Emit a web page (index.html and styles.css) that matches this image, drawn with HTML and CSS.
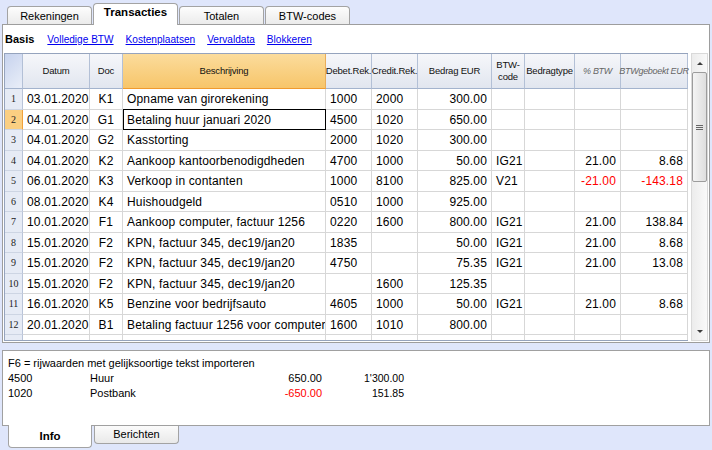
FILE: index.html
```html
<!DOCTYPE html>
<html>
<head>
<meta charset="utf-8">
<link rel="stylesheet" href="styles.css">
</head>
<body>
<div class="tabs">
  <div class="tab">Rekeningen</div>
  <div class="tab active">Transacties</div>
  <div class="tab">Totalen</div>
  <div class="tab">BTW-codes</div>
</div>
<div class="panel">
  <div class="subtabs">
    <span class="basis">Basis</span>
    <a href="#">Volledige BTW</a>
    <a href="#">Kostenplaatsen</a>
    <a href="#">Vervaldata</a>
    <a href="#">Blokkeren</a>
  </div>
  <div class="gridarea">
    <div class="table">
      <div class="cols thead">
        <div class="h corner"></div>
        <div class="h">Datum</div>
        <div class="h">Doc</div>
        <div class="h sel">Beschrijving</div>
        <div class="h">Debet.Rek.</div>
        <div class="h">Credit.Rek.</div>
        <div class="h">Bedrag EUR</div>
        <div class="h">BTW-<br>code</div>
        <div class="h">Bedragtype</div>
        <div class="h it">% BTW</div>
        <div class="h it">BTWgeboekt EUR</div>
      </div>
      <div class="tbody">
        <div class="cols row"><div class="n">1</div><div class="c">03.01.2020</div><div class="c ctr">K1</div><div class="c">Opname van girorekening</div><div class="c">1000</div><div class="c">2000</div><div class="c r">300.00</div><div class="c"></div><div class="c"></div><div class="c r"></div><div class="c r"></div></div>
        <div class="cols row"><div class="n cur">2</div><div class="c">04.01.2020</div><div class="c ctr">G1</div><div class="c focus">Betaling huur januari 2020</div><div class="c">4500</div><div class="c">1020</div><div class="c r">650.00</div><div class="c"></div><div class="c"></div><div class="c r"></div><div class="c r"></div></div>
        <div class="cols row"><div class="n">3</div><div class="c">04.01.2020</div><div class="c ctr">G2</div><div class="c">Kasstorting</div><div class="c">2000</div><div class="c">1020</div><div class="c r">300.00</div><div class="c"></div><div class="c"></div><div class="c r"></div><div class="c r"></div></div>
        <div class="cols row"><div class="n">4</div><div class="c">04.01.2020</div><div class="c ctr">K2</div><div class="c">Aankoop kantoorbenodigdheden</div><div class="c">4700</div><div class="c">1000</div><div class="c r">50.00</div><div class="c">IG21</div><div class="c"></div><div class="c r">21.00</div><div class="c r">8.68</div></div>
        <div class="cols row"><div class="n">5</div><div class="c">06.01.2020</div><div class="c ctr">K3</div><div class="c">Verkoop in contanten</div><div class="c">1000</div><div class="c">8100</div><div class="c r">825.00</div><div class="c">V21</div><div class="c"></div><div class="c r neg">-21.00</div><div class="c r neg">-143.18</div></div>
        <div class="cols row"><div class="n">6</div><div class="c">08.01.2020</div><div class="c ctr">K4</div><div class="c">Huishoudgeld</div><div class="c">0510</div><div class="c">1000</div><div class="c r">925.00</div><div class="c"></div><div class="c"></div><div class="c r"></div><div class="c r"></div></div>
        <div class="cols row"><div class="n">7</div><div class="c">10.01.2020</div><div class="c ctr">F1</div><div class="c">Aankoop computer, factuur 1256</div><div class="c">0220</div><div class="c">1600</div><div class="c r">800.00</div><div class="c">IG21</div><div class="c"></div><div class="c r">21.00</div><div class="c r">138.84</div></div>
        <div class="cols row"><div class="n">8</div><div class="c">15.01.2020</div><div class="c ctr">F2</div><div class="c">KPN, factuur 345, dec19/jan20</div><div class="c">1835</div><div class="c"></div><div class="c r">50.00</div><div class="c">IG21</div><div class="c"></div><div class="c r">21.00</div><div class="c r">8.68</div></div>
        <div class="cols row"><div class="n">9</div><div class="c">15.01.2020</div><div class="c ctr">F2</div><div class="c">KPN, factuur 345, dec19/jan20</div><div class="c">4750</div><div class="c"></div><div class="c r">75.35</div><div class="c">IG21</div><div class="c"></div><div class="c r">21.00</div><div class="c r">13.08</div></div>
        <div class="cols row"><div class="n">10</div><div class="c">15.01.2020</div><div class="c ctr">F2</div><div class="c">KPN, factuur 345, dec19/jan20</div><div class="c"></div><div class="c">1600</div><div class="c r">125.35</div><div class="c"></div><div class="c"></div><div class="c r"></div><div class="c r"></div></div>
        <div class="cols row"><div class="n">11</div><div class="c">16.01.2020</div><div class="c ctr">K5</div><div class="c">Benzine voor bedrijfsauto</div><div class="c">4605</div><div class="c">1000</div><div class="c r">50.00</div><div class="c">IG21</div><div class="c"></div><div class="c r">21.00</div><div class="c r">8.68</div></div>
        <div class="cols row"><div class="n">12</div><div class="c">20.01.2020</div><div class="c ctr">B1</div><div class="c">Betaling factuur 1256 voor computer</div><div class="c">1600</div><div class="c">1010</div><div class="c r">800.00</div><div class="c"></div><div class="c"></div><div class="c r"></div><div class="c r"></div></div>
        <div class="cols row"><div class="n"></div><div class="c"></div><div class="c"></div><div class="c"></div><div class="c"></div><div class="c"></div><div class="c"></div><div class="c"></div><div class="c"></div><div class="c"></div><div class="c"></div></div>
      </div>
    </div>
    <div class="scroll">
      <div class="arrow up"></div>
      <div class="thumb"><span></span><span></span><span></span></div>
      <div class="spacer"></div>
      <div class="arrow down"></div>
    </div>
  </div>
</div>
<div class="info">
  <div class="line">F6 = rijwaarden met gelijksoortige tekst importeren</div>
  <div class="irow"><span>4500</span><span>Huur</span><span class="r">650.00</span><span class="r small">1'300.00</span></div>
  <div class="irow"><span>1020</span><span>Postbank</span><span class="r neg">-650.00</span><span class="r small">151.85</span></div>
</div>
<div class="btabs">
  <div class="btab active">Info</div>
  <div class="btab">Berichten</div>
</div>
</body>
</html>
```
FILE: styles.css
```css
html, body {
  margin: 0;
  padding: 0;
}
body {
  background: #dfe6fb;
  font-family: "Liberation Sans", Arial, sans-serif;
  color: #000;
  width: 712px;
  height: 450px;
  overflow: hidden;
}
.tabs {
  display: flex;
  align-items: flex-end;
  height: 24px;
  padding-left: 7px;
  gap: 1px;
}
.tab {
  width: 85px;
  height: 18px;
  box-sizing: border-box;
  border: 1px solid #a3a3a3;
  border-bottom: none;
  border-radius: 4px 4px 0 0;
  background: linear-gradient(#fdfdfd, #ebebeb);
  text-align: center;
  font-size: 11px;
  line-height: 18px;
}
.tab.active {
  height: 22px;
  margin-bottom: -1px;
  background: #fff;
  font-weight: bold;
  font-size: 11.5px;
  line-height: 17px;
  position: relative;
  z-index: 1;
}
.panel {
  margin-left: 2px;
  width: 708px;
  height: 319px;
  box-sizing: border-box;
  border: 1px solid #9d9d9d;
  background: #fff;
}
.subtabs {
  height: 28px;
  display: flex;
  align-items: center;
  gap: 12px;
  padding-left: 2px;
  font-size: 10.1px;
}
.subtabs .basis {
  font-weight: bold;
  font-size: 11px;
  margin-right: 1px;
}
.subtabs a {
  color: #0000ee;
  text-decoration: underline;
}
.gridarea {
  display: flex;
  gap: 3px;
  padding-left: 1px;
}
.table {
  width: 684px;
  height: 288px;
  box-sizing: border-box;
  border: 1px solid #95a3bd;
  border-right: none;
  display: flex;
  flex-direction: column;
}
.cols {
  display: grid;
  grid-template-columns: 18px 67px 33px 203px 46px 46px 74px 33px 50px 46px 67px;
}
.thead {
  height: 35px;
}
.h {
  box-sizing: border-box;
  border-right: 1px solid #b3c0d6;
  border-bottom: 1px solid #a3b3cd;
  background: linear-gradient(#f6f7fa, #e1e6ef);
  display: flex;
  align-items: center;
  justify-content: center;
  text-align: center;
  font-size: 9.5px;
  line-height: 12px;
  letter-spacing: -0.2px;
  white-space: nowrap;
  color: #111;
}
.h.corner {
  background: linear-gradient(135deg, #c7d3ee, #e9eef8);
}
.h.sel {
  background: linear-gradient(#fbdc9c, #f7c56a);
  border-right-color: #e9ad5a;
  border-bottom: 1px solid #f09a2e;
}
.h.it {
  font-style: italic;
  color: #666;
  font-size: 9px;
  letter-spacing: -0.3px;
}
.tbody {
  height: 251px;
  overflow: hidden;
}
.row {
  height: 20.5px;
}
.row > div {
  box-sizing: border-box;
  border-bottom: 1px solid #d7d7d7;
  border-right: 1px solid #d7d7d7;
  font-size: 12px;
  letter-spacing: 0.15px;
  line-height: 20px;
  white-space: nowrap;
  overflow: hidden;
  padding: 0 3px 0 4px;
}
.row .n {
  background: #e6ebf5;
  border-right-color: #b9c4d8;
  border-bottom-color: #cdd5e3;
  font-family: "Liberation Serif", serif;
  font-size: 10px;
  letter-spacing: 0;
  text-align: center;
  padding: 0;
  color: #222;
}
.row .n.cur {
  background: #fbcf82;
  border-right-color: #f0a23c;
}
.row .ctr {
  text-align: center;
  padding: 0;
}
.row .r {
  text-align: right;
  padding: 0 4px 0 0;
}
.row .focus {
  outline: 1px solid #000;
  outline-offset: -1px;
  margin-top: -1px;
  padding-top: 1px;
}
.neg {
  color: #f00;
}
.scroll {
  width: 17px;
  height: 288px;
  box-sizing: border-box;
  border: 1px solid #d9d9d9;
  background: linear-gradient(90deg, #ececec, #f9f9f9);
  display: flex;
  flex-direction: column;
  align-items: center;
}
.arrow {
  height: 18px;
  width: 15px;
  display: flex;
  align-items: center;
  justify-content: center;
}
.arrow::after {
  content: "";
  width: 0;
  height: 0;
  border-left: 3px solid transparent;
  border-right: 3px solid transparent;
}
.arrow.up::after {
  border-bottom: 3px solid #3c3c3c;
}
.arrow.down::after {
  border-top: 3px solid #3c3c3c;
}
.thumb {
  width: 15px;
  height: 110px;
  box-sizing: border-box;
  border: 1px solid #9c9c9c;
  border-radius: 2px;
  background: linear-gradient(90deg, #f4f4f4, #dedede);
  display: flex;
  flex-direction: column;
  align-items: center;
  justify-content: center;
  gap: 1px;
}
.thumb span {
  width: 7px;
  height: 1px;
  background: #666;
}
.spacer {
  flex: 1;
}
.info {
  margin-top: 7px;
  margin-left: 2px;
  width: 708px;
  height: 76px;
  box-sizing: border-box;
  border: 1px solid #a0a0a0;
  background: #fff;
  padding: 5px 0 0 5px;
  font-size: 11px;
  line-height: 15px;
}
.irow {
  display: grid;
  grid-template-columns: 82px 150px 82px 82px;
}
.irow .r {
  text-align: right;
}
.irow .small {
  font-size: 10.5px;
}
.btabs {
  display: flex;
  padding-left: 8px;
  gap: 2px;
  align-items: flex-start;
}
.btab {
  width: 85px;
  height: 18px;
  box-sizing: border-box;
  border: 1px solid #a3a3a3;
  border-top: none;
  border-radius: 0 0 4px 4px;
  background: linear-gradient(#fbfbfb, #e9e9e9);
  text-align: center;
  font-size: 11px;
  line-height: 17px;
}
.btab.active {
  width: 84px;
  height: 23px;
  margin-top: -1px;
  background: #fff;
  font-weight: bold;
  font-size: 11.5px;
  line-height: 23px;
  position: relative;
  z-index: 1;
}
```
